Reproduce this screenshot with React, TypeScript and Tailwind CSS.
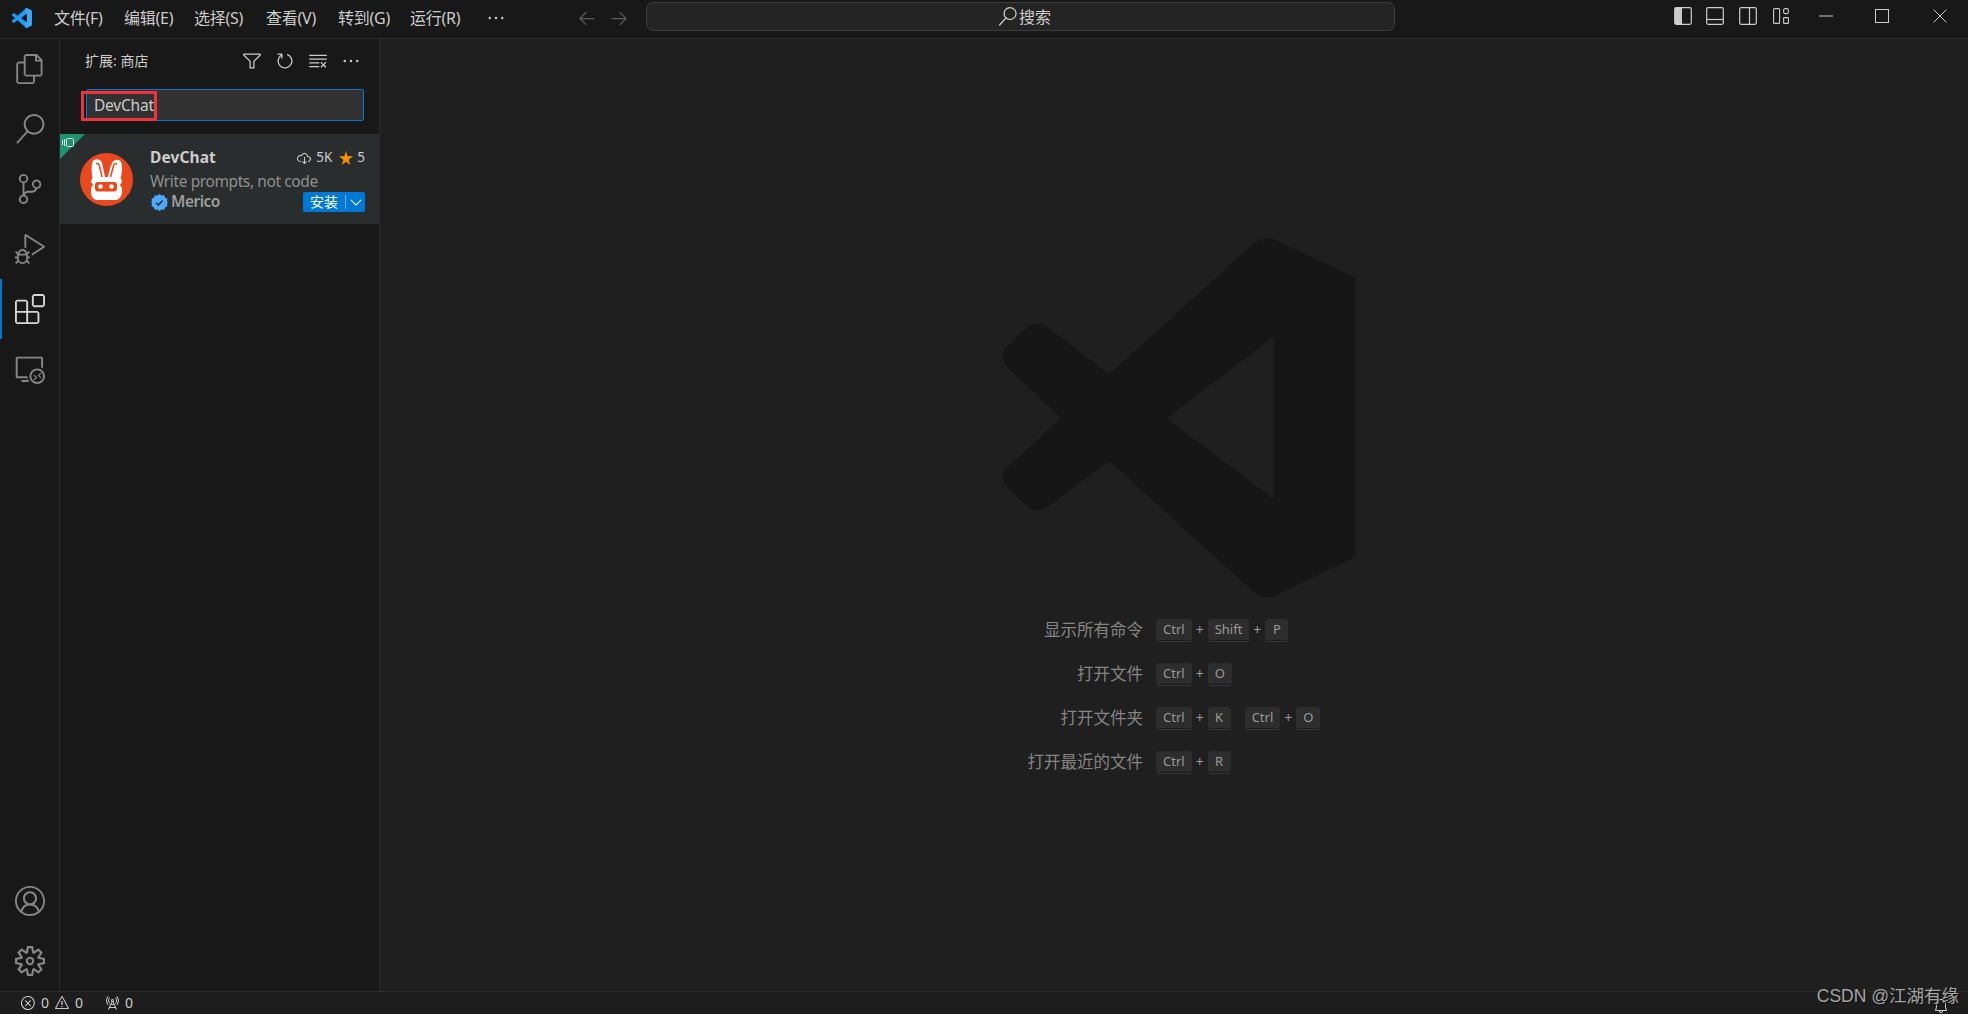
import React from 'react'
import {
  VscFiles,
  VscSearch,
  VscSourceControl,
  VscDebugAlt,
  VscExtensions,
  VscRemoteExplorer,
  VscAccount,
  VscSettingsGear,
  VscFilter,
  VscRefresh,
  VscClearAll,
  VscEllipsis,
  VscError,
  VscWarning,
  VscRadioTower,
  VscBell,
  VscArrowLeft,
  VscArrowRight,
  VscStarFull,
  VscCloudDownload,
  VscChevronDown,
} from 'react-icons/vsc'

const FONT = "font-['Noto_Sans','Noto_Sans_CJK_SC',sans-serif]"

const MENUS = [
  { label: '文件(F)', width: 'w-[70px]' },
  { label: '编辑(E)', width: 'w-[70px]' },
  { label: '选择(S)', width: 'w-[72px]' },
  { label: '查看(V)', width: 'w-[72px]' },
  { label: '转到(G)', width: 'w-[72px]' },
  { label: '运行(R)', width: 'w-[78px]' },
]

const SHORTCUTS = [
  { label: '显示所有命令', groups: [['Ctrl', 'Shift', 'P']] },
  { label: '打开文件', groups: [['Ctrl', 'O']] },
  { label: '打开文件夹', groups: [['Ctrl', 'K'], ['Ctrl', 'O']] },
  { label: '打开最近的文件', groups: [['Ctrl', 'R']] },
]

function VscodeLogo() {
  return (
    <svg width="20" height="20" viewBox="0 0 100 100" className="shrink-0">
      <path d="M96 11 75 1a6 6 0 0 0-7 1L28 39 11 26a4 4 0 0 0-5 0L1 31a4 4 0 0 0 0 6l15 13L1 63a4 4 0 0 0 0 6l5 5a4 4 0 0 0 5 0l17-13 40 37a6 6 0 0 0 7 1l21-10a6 6 0 0 0 3-5V16a6 6 0 0 0-3-5ZM75 73 45 50l30-23Z" fill="#1f9cf0" />
      <path d="M96 11 75 1a6 6 0 0 0-7 1v96a6 6 0 0 0 7 1l21-10a6 6 0 0 0 3-5V16a6 6 0 0 0-3-5ZM75 73 68 68V32l7-5Z" fill="#3aa9f5" />
    </svg>
  )
}

function LayoutIcons() {
  return (
    <div className="flex items-center gap-[14px] text-[#cccccc]">
      <svg width="18" height="18" viewBox="0 0 18 18" fill="none">
        <rect x="0.7" y="0.7" width="16.6" height="16.6" rx="1.5" stroke="currentColor" strokeWidth="1.2" />
        <rect x="1" y="1" width="7" height="16" fill="currentColor" />
      </svg>
      <svg width="18" height="18" viewBox="0 0 18 18" fill="none">
        <rect x="0.7" y="0.7" width="16.6" height="16.6" rx="1.5" stroke="currentColor" strokeWidth="1.2" />
        <path d="M1 12.5h16" stroke="currentColor" strokeWidth="1.2" />
      </svg>
      <svg width="18" height="18" viewBox="0 0 18 18" fill="none" className="ml-[1px]">
        <rect x="0.7" y="0.7" width="16.6" height="16.6" rx="1.5" stroke="currentColor" strokeWidth="1.2" />
        <path d="M10.5 1v16" stroke="currentColor" strokeWidth="1.2" />
      </svg>
      <svg width="16" height="16" viewBox="0 0 16 16" fill="none" className="ml-[2px]">
        <rect x="0.6" y="0.6" width="6" height="14.8" rx="1" stroke="currentColor" strokeWidth="1.1" />
        <rect x="10.6" y="0.6" width="4.8" height="5" rx="1.5" stroke="currentColor" strokeWidth="1.1" />
        <rect x="10.6" y="9.6" width="4.8" height="5.800" rx="0.5" stroke="currentColor" strokeWidth="1.1" />
      </svg>
    </div>
  )
}

function WindowControls() {
  return (
    <div className="ml-[30px] flex items-center gap-[42px] text-[#cccccc]">
      <svg width="14" height="14" viewBox="0 0 14 14" fill="none" stroke="currentColor" strokeWidth="1">
        <path d="M0 7h14" />
      </svg>
      <svg width="14" height="14" viewBox="0 0 14 14" fill="none" stroke="currentColor" strokeWidth="1">
        <rect x="0.5" y="0.5" width="13" height="13" />
      </svg>
      <svg width="14" height="14" viewBox="0 0 14 14" fill="none" stroke="currentColor" strokeWidth="1" className="ml-[2px]">
        <path d="M0.500 0.500l13 13M13.500 0.500l-13 13" />
      </svg>
    </div>
  )
}

function TitleBar() {
  return (
    <div className="flex h-[39px] shrink-0 border-b border-[#2b2b2b] bg-[#181818] text-[#cccccc]">
      <div className="flex w-[646px] shrink-0 items-center pb-[3px]">
        <div className="flex w-[54px] justify-center pr-[10px]">
          <VscodeLogo />
        </div>
        {MENUS.map((m) => (
          <span key={m.label} className={`${m.width} whitespace-nowrap text-[16px] leading-none tracking-[-0.25px]`}>
            {m.label}
          </span>
        ))}
        <VscEllipsis size={20} className="ml-[-2px]" />
        <VscArrowLeft size={20} className="ml-[71px] text-[#5a5a5a]" />
        <VscArrowRight size={20} className="ml-[12px] text-[#5a5a5a]" />
      </div>
      <div className="my-[2px] flex h-[29px] w-[749px] shrink-0 items-center justify-center gap-[2px] rounded-[7px] border border-[#3c3c3c] bg-[#242424] pl-[8px]">
        <VscSearch size={19} />
        <span className="text-[16px] leading-none">搜索</span>
      </div>
      <div className="flex flex-1 items-center pb-[6px] pl-[279px]">
        <LayoutIcons />
        <WindowControls />
      </div>
    </div>
  )
}

function ActivityItem({ children, active }: { children: React.ReactNode; active?: boolean }) {
  return (
    <div
      className={`flex h-[60px] w-full items-center justify-center border-l-2 ${
        active ? 'border-[#0078d4] text-[#d7d7d7]' : 'border-transparent text-[#868686]'
      }`}
    >
      {children}
    </div>
  )
}

function ActivityBar() {
  return (
    <div className="flex w-[60px] shrink-0 flex-col justify-between border-r border-[#2b2b2b] bg-[#181818] pr-[2px]">
      <div className="flex flex-col">
        <ActivityItem><VscFiles size={30} /></ActivityItem>
        <ActivityItem><VscSearch size={30} /></ActivityItem>
        <ActivityItem><VscSourceControl size={30} /></ActivityItem>
        <ActivityItem><VscDebugAlt size={30} /></ActivityItem>
        <ActivityItem active><VscExtensions size={30} /></ActivityItem>
        <ActivityItem><VscRemoteExplorer size={30} /></ActivityItem>
      </div>
      <div className="flex flex-col">
        <ActivityItem><VscAccount size={30} /></ActivityItem>
        <ActivityItem><VscSettingsGear size={30} /></ActivityItem>
      </div>
    </div>
  )
}

function RabbitLogo() {
  return (
    <svg width="53" height="53" viewBox="0 0 53 53" className="shrink-0">
      <circle cx="26.5" cy="26.5" r="26.5" fill="#e9491c" />
      <path d="M14 30C11 22 11 11 13 8c3-3 8-2 9 2 1 4 2 9 3 14h3c1-5 2-10 4-14 2-4 7-4 9-1 2 5 1 14-2 21Z" fill="#fff" />
      <path d="M16 11c2-1 3 0 3.500 2l2.500 11M37 11c-2-1-3 0-3.500 2l-3 11" stroke="#e9491c" strokeWidth="1.500" fill="none" />
      <path d="M15 24h22c3 0 5 2 5 5l-2 3 2 3v4c0 4-3 8-6 8H17c-4 0-6-4-6-8v-4l2-3-2-3c0-3 2-5 4-5Z" fill="#fff" />
      <rect x="15" y="29" width="22" height="9.500" rx="3" fill="#e9491c" />
      <circle cx="20.500" cy="33.500" r="2.300" fill="#fff" />
      <circle cx="31.500" cy="33.500" r="2.300" fill="#fff" />
    </svg>
  )
}

function VerifiedBadge() {
  return (
    <svg width="17" height="17" viewBox="0 0 16 16" className="shrink-0">
      <path
        d="M8 0l2 1.400 2.400-.2.900 2.300 2.200 1-.5 2.400L16 8l-1 1.100.5 2.400-2.200 1-.9 2.300-2.400-.2L8 16l-2-1.400-2.400.2-.9-2.300-2.200-1 .5-2.400L0 8l1-1.100-.5-2.400 2.200-1 .9-2.300L6 1.400Z"
        fill="#4daafc"
      />
      <path d="M4.800 8.200l2.200 2.200 4-4.300" stroke="#1f2a33" strokeWidth="1.400" fill="none" />
    </svg>
  )
}

function ExtensionRow() {
  return (
    <div className="relative flex h-[90px] items-center gap-[17px] bg-[#2a2d2e] pl-[20px] pr-[14px]">
      {/* corner badge */}
      <div className="absolute left-0 top-0 h-0 w-0 border-b-[25px] border-l-[25px] border-b-transparent border-l-[#1d9271]" />
      <svg width="12" height="10" viewBox="0 0 12 10" fill="none" className="absolute left-[2px] top-[4px]" stroke="#e6e6e6" strokeWidth="1">
        <rect x="4.500" y="0.500" width="7" height="8" rx="1" />
        <path d="M0.500 2v5M2.500 1v7" />
      </svg>
      <RabbitLogo />
      <div className="flex min-w-0 flex-1 flex-col pt-[1px]">
        <div className="flex h-[23px] items-center justify-between text-[#cccccc]">
          <span className="text-[15.5px] font-bold leading-none tracking-[0.1px]">DevChat</span>
          <div className="flex items-center text-[13.5px] leading-none">
            <VscCloudDownload size={16} />
            <span className="ml-[4px]">5K</span>
            <VscStarFull size={16} className="ml-[6px] text-[#ff8e00]" />
            <span className="ml-[3px]">5</span>
          </div>
        </div>
        <div className="mt-[1px] h-[21px] whitespace-nowrap text-[15.5px] leading-[21px] tracking-[-0.4px] text-[#8f8f8f]">
          Write prompts, not code
        </div>
        <div className="flex h-[21px] items-center justify-between">
          <div className="ml-[1px] flex items-center gap-[3px]">
            <VerifiedBadge />
            <span className="text-[15.5px] font-semibold leading-none tracking-[-0.5px] text-[#9d9d9d]">Merico</span>
          </div>
          <div className="flex h-[20px] w-[62px] items-center rounded-[2px] bg-[#0078d4] text-white">
            <span className="w-[42px] text-center text-[14px] leading-none">安装</span>
            <span className="h-[14px] w-px bg-[#6aaee3]" />
            <VscChevronDown size={18} className="ml-[1px]" />
          </div>
        </div>
      </div>
    </div>
  )
}

function SideBar() {
  return (
    <div className="flex w-[320px] shrink-0 flex-col border-r border-[#2b2b2b] bg-[#181818]">
      <div className="flex h-[44px] items-center pl-[25px] pr-[18px] text-[#cccccc]">
        <span className="text-[14px] leading-none">扩展: 商店</span>
        <div className="ml-auto flex items-center gap-[13px]">
          <VscFilter size={20} />
          <VscRefresh size={20} />
          <VscClearAll size={20} />
          <VscEllipsis size={20} />
        </div>
      </div>
      <div className="ml-[26px] mr-[15px] mt-[6px] h-[32px]">
        <div className="relative flex h-full items-center rounded-[2px] border border-[#0078d4] bg-[#313131] pl-[7px] pt-[1px] text-[15.5px] tracking-[-0.2px] text-[#cccccc]">
          DevChat
          {/* red annotation drawn over the input */}
          <div className="absolute bottom-[-1px] left-[-6px] top-[1px] w-[76px] border-[3px] border-[#f0333c]" />
        </div>
      </div>
      <div className="mt-[13px]">
        <ExtensionRow />
      </div>
    </div>
  )
}

function Key({ children }: { children: string }) {
  return (
    <span className="flex h-[22px] min-w-[23px] items-center justify-center rounded-[3px] border-b border-[#1a1a1a] bg-[#2d2d2d] px-[7px] text-[13px] leading-none text-[#9a9a9a] shadow-[0_1px_0_#3a3a3a]">
      {children}
    </span>
  )
}

function Editor() {
  return (
    <div className="flex min-w-0 flex-1 flex-col bg-[#1f1f1f] pl-[620px] pt-[197px]">
      <svg width="358" height="363" viewBox="120 75 1075 1090" className="shrink-0">
        <path
          fillRule="evenodd"
          fill="#161616"
          d="M880 100C905 78 925 78 950 88L1187 200V1040L950 1152C925 1162 905 1162 880 1142L447 750 265 888C240 905 220 900 200 885L142 830C125 812 122 790 145 768L303 622 145 472C122 450 125 425 142 405L200 350C220 335 240 332 265 350L447 490ZM942 377 620 622 942 865Z"
        />
      </svg>
      <div className="ml-[-200px] mt-[20px] flex flex-col gap-[22px]">
        {SHORTCUTS.map((row) => (
          <div key={row.label} className="flex h-[22px] items-center">
            <span className="w-[343px] shrink-0 text-right text-[16.5px] leading-none text-[#858585]">{row.label}</span>
            <div className="ml-[13px] flex items-center gap-[14px]">
              {row.groups.map((group, i) => (
                <div key={i} className="flex items-center">
                  {group.map((k, j) => (
                    <React.Fragment key={k}>
                      {j > 0 && <span className="w-[16px] text-center text-[14px] leading-none text-[#9a9a9a]">+</span>}
                      <Key>{k}</Key>
                    </React.Fragment>
                  ))}
                </div>
              ))}
            </div>
          </div>
        ))}
      </div>
    </div>
  )
}

function StatusBar() {
  return (
    <div className="relative flex h-[23px] shrink-0 items-center border-t border-[#2b2b2b] bg-[#1d1d1d] pl-[20px] text-[14px] leading-none text-[#cccccc]">
      <VscError size={16} />
      <span className="ml-[5px]">0</span>
      <VscWarning size={16} className="ml-[5px]" />
      <span className="ml-[5px]">0</span>
      <VscRadioTower size={16} className="ml-[21px]" />
      <span className="ml-[5px]">0</span>
      <VscBell size={16} className="ml-auto mr-[19px] mt-[6px]" />
      {/* CSDN watermark sits on top of the status bar */}
      <span className="absolute bottom-[8px] right-[9px] whitespace-nowrap font-['Liberation_Sans','Noto_Sans_CJK_SC',sans-serif] text-[17.5px] leading-[20px] text-[#a5a5a5] [text-shadow:1px_1px_1px_#111111]">
        CSDN @江湖有缘
      </span>
    </div>
  )
}

export default function App() {
  return (
    <div className={`flex h-[1014px] w-[1968px] flex-col overflow-hidden bg-[#181818] ${FONT}`}>
      <TitleBar />
      <div className="flex min-h-0 flex-1">
        <ActivityBar />
        <SideBar />
        <Editor />
      </div>
      <StatusBar />
    </div>
  )
}
